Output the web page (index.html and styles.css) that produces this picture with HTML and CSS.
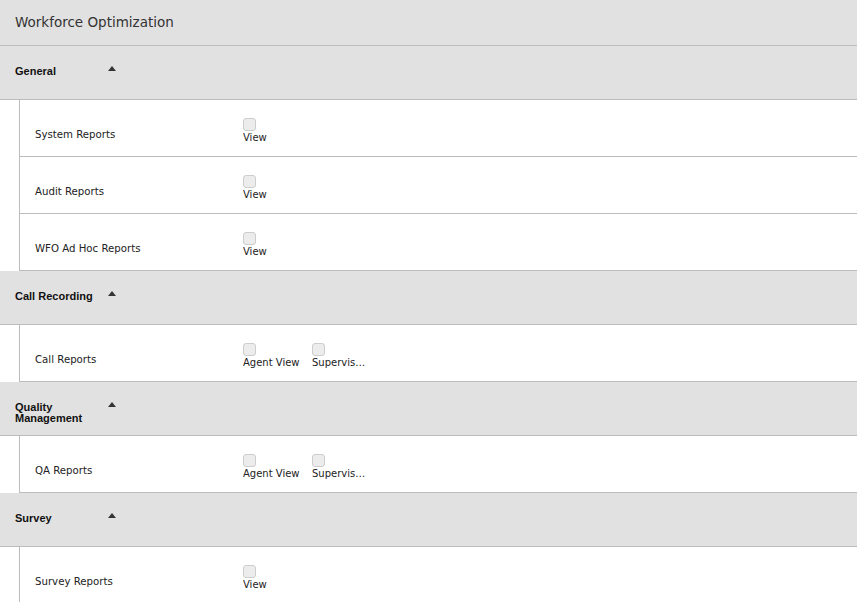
FILE: index.html
```html
<!DOCTYPE html>
<html lang="en">
<head>
    <meta charset="UTF-8">
    <meta name="viewport" content="width=device-width, initial-scale=1.0">
    <title>Workforce Optimization</title>
    <link rel="stylesheet" href="styles.css">
</head>
<body>
    <div class="title-bar">Workforce Optimization</div>

    <div class="section">
        <div class="section-header">
            <span class="section-name">General</span>
            <span class="caret"></span>
        </div>
        <div class="rows">
            <div class="row">
                <span class="row-label">System Reports</span>
                <div class="options">
                    <label class="option"><input type="checkbox" disabled><span>View</span></label>
                </div>
            </div>
            <div class="row">
                <span class="row-label">Audit Reports</span>
                <div class="options">
                    <label class="option"><input type="checkbox" disabled><span>View</span></label>
                </div>
            </div>
            <div class="row">
                <span class="row-label">WFO Ad Hoc Reports</span>
                <div class="options">
                    <label class="option"><input type="checkbox" disabled><span>View</span></label>
                </div>
            </div>
        </div>
    </div>

    <div class="section">
        <div class="section-header">
            <span class="section-name">Call Recording</span>
            <span class="caret"></span>
        </div>
        <div class="rows">
            <div class="row">
                <span class="row-label">Call Reports</span>
                <div class="options">
                    <label class="option"><input type="checkbox" disabled><span>Agent View</span></label>
                    <label class="option"><input type="checkbox" disabled><span title="Supervisor View">Supervisor View</span></label>
                </div>
            </div>
        </div>
    </div>

    <div class="section">
        <div class="section-header">
            <span class="section-name">Quality Management</span>
            <span class="caret"></span>
        </div>
        <div class="rows">
            <div class="row">
                <span class="row-label">QA Reports</span>
                <div class="options">
                    <label class="option"><input type="checkbox" disabled><span>Agent View</span></label>
                    <label class="option"><input type="checkbox" disabled><span title="Supervisor View">Supervisor View</span></label>
                </div>
            </div>
        </div>
    </div>

    <div class="section">
        <div class="section-header">
            <span class="section-name">Survey</span>
            <span class="caret"></span>
        </div>
        <div class="rows">
            <div class="row">
                <span class="row-label">Survey Reports</span>
                <div class="options">
                    <label class="option"><input type="checkbox" disabled><span>View</span></label>
                </div>
            </div>
        </div>
    </div>
</body>
</html>
```

FILE: styles.css
```css
body {
    margin: 0;
    padding: 0;
    background: #fff;
    font-family: "DejaVu Sans", Verdana, sans-serif;
    color: #222;
    overflow: hidden;
}
.title-bar {
    height: 45px;
    line-height: 45px;
    padding-left: 15px;
    background: #e1e1e1;
    border-bottom: 1px solid #bcbcbc;
    font-size: 13.5px;
    color: #333;
}
.section-header {
    display: flex;
    align-items: flex-start;
    height: 33px;
    padding: 20px 15px 0;
    background: #e1e1e1;
    border-bottom: 1px solid #bcbcbc;
}
.section-name {
    width: 85px;
    font-family: "Liberation Sans", Arial, sans-serif;
    font-weight: bold;
    font-size: 11px;
    line-height: 11px;
    color: #111;
}
.caret {
    width: 0;
    height: 0;
    margin-left: 8px;
    border-left: 4.5px solid transparent;
    border-right: 4.5px solid transparent;
    border-bottom: 5px solid #333;
}
.rows {
    margin-left: 19px;
    border-left: 1px solid #bcbcbc;
}
.row {
    display: flex;
    align-items: flex-start;
    height: 38px;
    padding: 18px 0 0 15px;
    border-bottom: 1px solid #bcbcbc;
}
.row-label {
    width: 208px;
    margin-top: 11px;
    font-size: 10.2px;
    line-height: 12px;
}
.options {
    display: flex;
    gap: 11px;
}
.option {
    display: flex;
    flex-direction: column;
    width: 58px;
    font-size: 10px;
    line-height: 12px;
}
.option span {
    white-space: nowrap;
    overflow: hidden;
    text-overflow: ellipsis;
    margin-top: 1px;
}
.option input {
    -webkit-appearance: none;
    appearance: none;
    width: 13px;
    height: 13px;
    margin: 0;
    background: #ececec;
    border: 1px solid #cdcdcd;
    border-radius: 3px;
}
```
